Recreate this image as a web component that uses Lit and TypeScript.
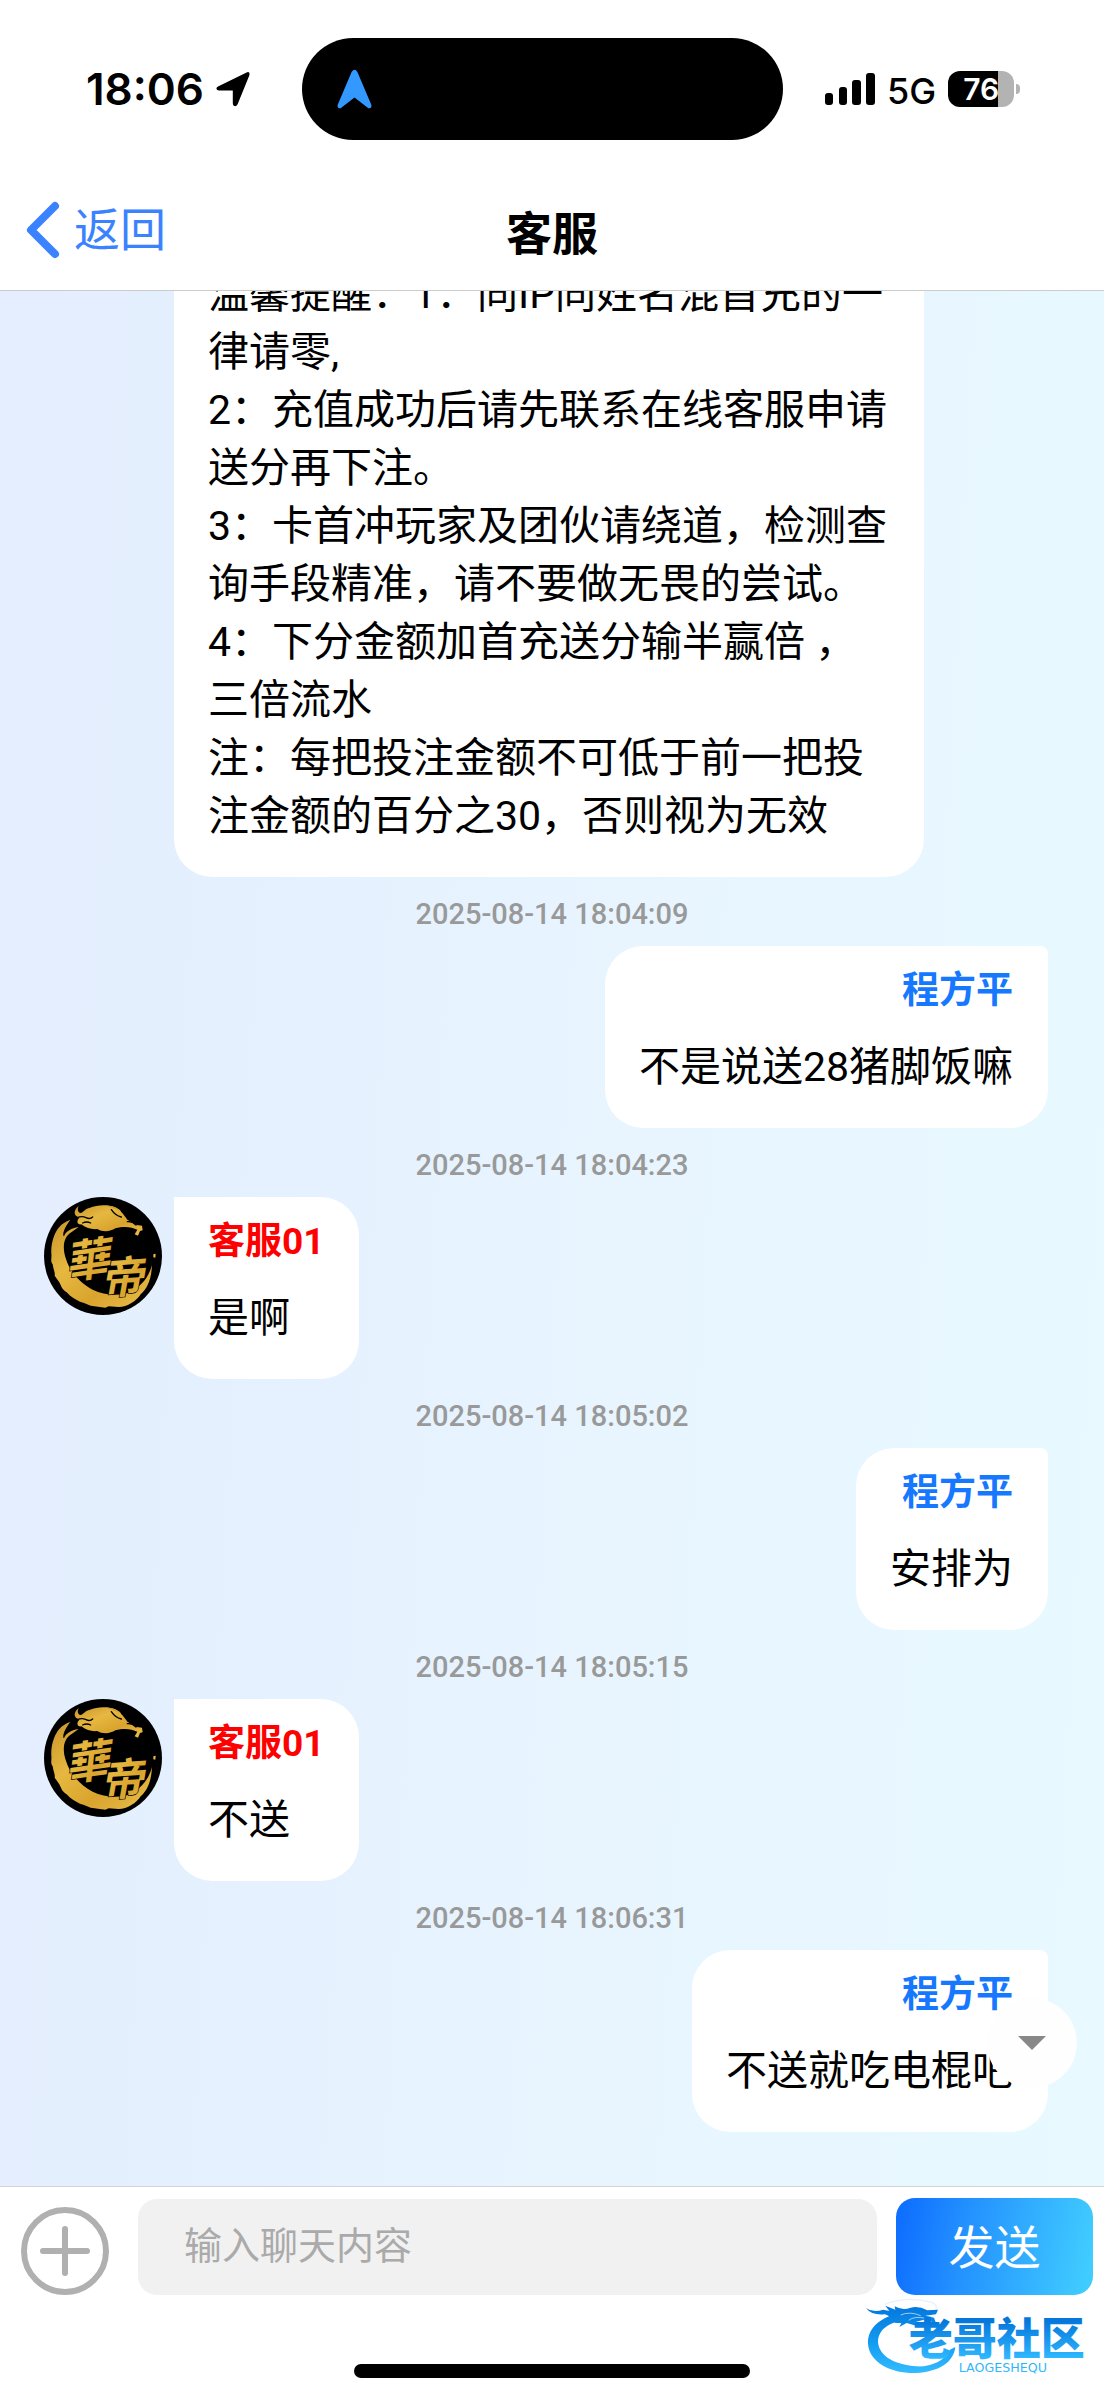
import { LitElement, html, css, svg, nothing } from "lit";
import { customElement, property, state } from "lit/decorators.js";

interface Message {
  side: "agent" | "me";
  name?: string;
  text: string;
  time?: string;
}

const MESSAGES: Message[] = [
  {
    side: "agent",
    text: [
      "温馨提醒：1：同IP同姓名混首充的一律请零,",
      "2：充值成功后请先联系在线客服申请送分再下注。",
      "3：卡首冲玩家及团伙请绕道，检测查询手段精准，请不要做无畏的尝试。",
      "4：下分金额加首充送分输半赢倍 ，三倍流水",
      "注：每把投注金额不可低于前一把投注金额的百分之30，否则视为无效",
    ].join("\n"),
  },
  { side: "me", name: "程方平", text: "不是说送28猪脚饭嘛", time: "2025-08-14 18:04:09" },
  { side: "agent", name: "客服01", text: "是啊", time: "2025-08-14 18:04:23" },
  { side: "me", name: "程方平", text: "安排为", time: "2025-08-14 18:05:02" },
  { side: "agent", name: "客服01", text: "不送", time: "2025-08-14 18:05:15" },
  { side: "me", name: "程方平", text: "不送就吃电棍吧", time: "2025-08-14 18:06:31" },
];

@customElement("status-bar")
export class StatusBar extends LitElement {
  static styles = css`
    :host {
      display: grid;
      grid-template-columns: 302fr 481fr 321fr;
      align-items: center;
      height: 177px;
      flex: none;
      font-family: Inter, "Liberation Sans", sans-serif;
      color: #000;
    }
    .left {
      display: flex;
      align-items: center;
      gap: 12px;
      padding-left: 86px;
    }
    .clock {
      font-size: 44px;
      line-height: 54px;
      font-weight: 600;
    }
    .island {
      display: flex;
      align-items: center;
      height: 102px;
      border-radius: 51px;
      background: #000;
      padding-left: 35px;
    }
    .right {
      display: flex;
      align-items: center;
      padding-left: 42px;
    }
    .network {
      font-size: 36px;
      line-height: 44px;
      font-weight: 500;
      margin: 4px 12px 0 12px;
    }
    .battery {
      display: flex;
      align-items: center;
      justify-content: center;
      width: 66px;
      height: 36px;
      border-radius: 12px;
      background: linear-gradient(90deg, #000 76%, #b3b3b3 76%);
      color: #fff;
      font-size: 30px;
      line-height: 36px;
      font-weight: 600;
    }
    .nub {
      width: 4px;
      height: 10px;
      margin-left: 2px;
      border-radius: 0 5px 5px 0;
      background: #b3b3b3;
    }
    svg {
      display: block;
      flex: none;
    }
  `;

  render() {
    return html`
      <div class="left">
        <span class="clock">18:06</span>
        <svg width="34" height="36" viewBox="0 0 34 36" aria-hidden="true">
          <path d="M2.5 15.2 30.6 1.4Q34 .2 33.4 4.2L21.6 33.2Q20.2 36 17.8 34.8 16.8 34 16.8 32V19.6H3Q.6 19.4.4 17.6.4 16.2 2.5 15.2Z" fill="#000" />
        </svg>
      </div>
      <div class="island">
        <svg width="35" height="40" viewBox="0 0 35 40" aria-hidden="true">
          <path d="M14.6 3Q17.5-1.6 20.4 3L34.4 36Q35 39.8 31.4 39.2L17.5 28.6 3.6 39.2Q0 39.8.6 36Z" fill="#3399ff" />
        </svg>
      </div>
      <div class="right">
        <svg width="50" height="33" viewBox="0 0 50 33" aria-hidden="true">
          <rect x="0" y="21" width="8" height="12" rx="3" />
          <rect x="14" y="15" width="8" height="18" rx="3" />
          <rect x="27" y="8" width="9" height="25" rx="3" />
          <rect x="41" y="1" width="9" height="32" rx="3" />
        </svg>
        <span class="network">5G</span>
        <span class="battery">76</span>
        <span class="nub"></span>
      </div>
    `;
  }
}

@customElement("agent-avatar")
export class AgentAvatar extends LitElement {
  static styles = css`
    :host {
      display: block;
      width: 118px;
      height: 118px;
      flex: none;
    }
    svg {
      display: block;
      width: 100%;
      height: 100%;
    }
    .mark {
      font-family: "Noto Sans CJK TC", sans-serif;
      font-weight: 700;
      font-style: italic;
    }
  `;

  render() {
    return html`
      <svg viewBox="12 14 354 354" role="img" aria-label="華帝">
        <defs>
          <linearGradient id="gold" x1="0" y1="0" x2="1" y2="1">
            <stop offset="0" stop-color="#c9942a" />
            <stop offset="0.35" stop-color="#e6b840" />
            <stop offset="0.65" stop-color="#d9a42e" />
            <stop offset="1" stop-color="#e9be4c" />
          </linearGradient>
        </defs>
        <circle cx="189" cy="191" r="177" fill="#000" />
        <path
          fill="url(#gold)"
          d="M58 104C45 118 32 150 34 184 36 196 30 206 38 216 40 232 46 240 44 250L58 270C64 282 66 292 80 300 92 314 108 322 120 328L132 332 152 340 196 346 206 342 236 344C262 344 290 326 302 306 322 288 334 262 336 218 328 248 312 272 284 292 252 312 200 312 158 292 116 270 88 234 78 200 66 166 70 134 94 120L116 104C92 108 76 118 72 132 64 128 78 96 92 82 76 88 66 94 58 104Z"
        />
        <path
          fill="url(#gold)"
          d="M116 41C102 52 102 64 108 70L118 76C108 86 112 98 124 96 140 108 156 112 172 110 188 120 212 118 226 108 252 100 276 104 292 112L284 126 294 130 300 116 308 114 306 100 290 98 262 82C250 66 236 46 216 42 196 36 168 38 150 46 136 48 130 60 122 62 112 60 112 50 116 41Z"
        />
        <g fill="none" stroke="#000" stroke-width="4" stroke-linecap="round">
          <path d="M112 76Q126 70 138 76T158 74" />
          <path d="M214 52Q226 70 244 74M262 88Q276 86 288 98" />
          <path d="M128 92Q140 86 152 92" />
        </g>
        <path fill="url(#gold)" d="M196 39Q236 42 244 60 222 48 196 39ZM340 186l7-2-1 12-6-1Z" />
        <g class="mark" fill="url(#gold)" stroke="#000" stroke-width="4" paint-order="stroke">
          <text x="74" y="252" font-size="134" transform="rotate(-8 142 205)">華</text>
          <text x="180" y="302" font-size="130" transform="rotate(-4 248 255)">帝</text>
        </g>
      </svg>
    `;
  }
}

@customElement("chat-message")
export class ChatMessage extends LitElement {
  @property({ attribute: false }) message!: Message;

  static styles = css`
    :host {
      display: block;
      flex: none;
    }
    .time {
      display: block;
      padding: 20px 0 14px;
      text-align: center;
      font-family: Roboto, "Noto Sans CJK SC", sans-serif;
      font-size: 29px;
      line-height: 35px;
      font-weight: 500;
      color: #999;
    }
    .row {
      display: flex;
      align-items: flex-start;
      gap: 12px;
      padding: 0 56px 0 44px;
    }
    .row.me {
      justify-content: flex-end;
    }
    .spacer {
      width: 118px;
      flex: none;
    }
    .bubble {
      display: flex;
      flex-direction: column;
      gap: 24px;
      box-sizing: border-box;
      max-width: 750px;
      padding: 22px 35px 32px 34px;
      background: #fff;
      border-radius: 0 38px 38px 38px;
    }
    .me .bubble {
      border-radius: 38px 8px 38px 38px;
      text-align: right;
    }
    .name {
      font-size: 37px;
      line-height: 46px;
      font-weight: 700;
      color: #f00;
    }
    .me .name {
      color: #1677ff;
    }
    .text {
      margin: 0;
      font-size: 41px;
      line-height: 58px;
      color: #000;
      white-space: pre-line;
    }
  `;

  render() {
    const { side, name, text, time } = this.message;
    const avatar =
      side === "me" ? nothing : name ? html`<agent-avatar></agent-avatar>` : html`<span class="spacer"></span>`;
    return html`
      ${time ? html`<time class="time">${time}</time>` : nothing}
      <div class="row ${side}">
        ${avatar}
        <div class="bubble">
          ${name ? html`<span class="name">${name}</span>` : nothing}
          <p class="text">${text}</p>
        </div>
      </div>
    `;
  }
}

@customElement("community-mark")
export class CommunityMark extends LitElement {
  static styles = css`
    :host {
      display: block;
      width: 240px;
      height: 85px;
    }
    svg {
      display: block;
    }
    .cn {
      font-family: "Noto Sans CJK SC", sans-serif;
      font-weight: 900;
    }
    .latin {
      font-family: "DejaVu Sans", sans-serif;
    }
  `;

  render() {
    return html`
      <svg width="240" height="85" viewBox="0 0 720 255" role="img" aria-label="老哥社区">
        <defs>
          <linearGradient id="sea" gradientUnits="userSpaceOnUse" x1="0" y1="40" x2="0" y2="235">
            <stop offset="0" stop-color="#0579de" />
            <stop offset="0.5" stop-color="#129af0" />
            <stop offset="1" stop-color="#33bcff" />
          </linearGradient>
          <linearGradient id="ink" gradientUnits="userSpaceOnUse" x1="0" y1="80" x2="0" y2="190">
            <stop offset="0" stop-color="#0678dc" />
            <stop offset="1" stop-color="#2fb8ff" />
          </linearGradient>
        </defs>
        <path
          fill="url(#sea)"
          d="M100 60C50 74 22 108 24 146 28 204 96 236 168 234 236 230 280 204 286 156L270 164C256 196 214 216 170 214 108 210 58 186 54 142 54 106 84 84 122 78Z"
        />
        <path
          fill="url(#sea)"
          d="M18 40Q40 54 70 44L88 48 76 32 106 44 104 34Q128 48 152 38 176 32 202 46L234 44 228 58 196 62 222 68 228 84 192 74 164 82 168 92 140 84 118 96 124 84 104 84 112 72 88 72Q90 62 74 58 36 62 18 40Z"
        />
        <path fill="none" stroke="#4aaeee" stroke-opacity="0.15" stroke-width="4" d="M74 28Q140 2 216 22 232 30 228 42" />
        <g stroke="#fff" stroke-width="3" fill="none" stroke-opacity="0.6">
          <path d="M122 60Q150 48 182 62M146 76Q164 62 196 70" />
        </g>
        <text class="cn" x="146" y="180" font-size="132" fill="url(#ink)">老哥社区</text>
        <text class="latin" x="296" y="230" font-size="38" fill="url(#sea)">LAOGESHEQU</text>
      </svg>
    `;
  }
}

@customElement("app-root")
export class AppRoot extends LitElement {
  @state() private draft = "";

  static styles = css`
    :host {
      display: flex;
      flex-direction: column;
      height: 100vh;
      overflow: hidden;
      background: #fff;
      font-family: Roboto, "Noto Sans CJK SC", sans-serif;
    }
    button,
    input {
      font-family: inherit;
      border: 0;
      margin: 0;
      padding: 0;
      background: none;
    }
    .nav {
      display: grid;
      grid-template-columns: 1fr auto 1fr;
      align-items: center;
      flex: none;
      height: 113px;
      padding: 0 25px;
      border-bottom: 1px solid #ccc;
    }
    .back {
      display: flex;
      align-items: center;
      gap: 14px;
      justify-self: start;
      padding-bottom: 8px;
      color: #3b82ff;
      text-decoration: none;
      font-size: 46px;
      line-height: 58px;
      font-weight: 400;
    }
    .title {
      margin: 0;
      font-size: 46px;
      line-height: 58px;
      font-weight: 700;
      color: #000;
    }
    .chat {
      position: relative;
      display: flex;
      flex-direction: column;
      justify-content: flex-end;
      flex: 1;
      min-height: 0;
      overflow: hidden;
      padding-bottom: 54px;
      background: linear-gradient(93deg, #e5eeff 0%, #e4f0fe 22%, #e8f5ff 55%, #e8f9ff 100%);
    }
    .jump {
      position: absolute;
      right: 27px;
      bottom: 98px;
      display: flex;
      align-items: center;
      justify-content: center;
      width: 90px;
      height: 90px;
      border-radius: 50%;
      background: #fefefe;
    }
    .composer {
      display: flex;
      flex-direction: column;
      flex: none;
      box-sizing: border-box;
      height: 214px;
      border-top: 1px solid #d4d4d4;
      padding: 11px 11px 22px;
      background: #fff;
    }
    .form {
      display: flex;
      align-items: center;
      padding-left: 10px;
    }
    .add {
      flex: none;
      align-self: flex-end;
      margin-right: 29px;
    }
    .field {
      flex: 1;
      min-width: 0;
      box-sizing: border-box;
      height: 96px;
      padding: 0 46px 2px;
      border-radius: 19px;
      background: #f1f1f1;
      font-size: 38px;
      font-weight: 400;
      color: #000;
      outline: none;
    }
    .field::placeholder {
      color: #aaa;
      opacity: 1;
    }
    .send {
      flex: none;
      width: 197px;
      height: 97px;
      margin-left: 19px;
      padding-bottom: 6px;
      border-radius: 19px;
      background: linear-gradient(100deg, #0f6fff 4%, #2390ff 34%, #40ccff 96%);
      color: #fff;
      font-size: 46px;
      font-weight: 400;
    }
    .mark {
      align-self: flex-end;
      margin-right: -7px;
    }
    .home {
      align-self: center;
      width: 396px;
      height: 14px;
      margin-top: -16px;
      border-radius: 7px;
      background: #000;
    }
    svg {
      display: block;
    }
  `;

  private onInput(e: Event) {
    this.draft = (e.target as HTMLInputElement).value;
  }

  private plusIcon() {
    return svg`
      <circle cx="44" cy="44" r="41" />
      <path d="M22 44H66M44 22V66" />
    `;
  }

  render() {
    return html`
      <status-bar></status-bar>
      <header class="nav">
        <a class="back" href="#back">
          <svg width="35" height="58" viewBox="0 0 35 58" fill="none" stroke="#3b82ff" stroke-width="8" stroke-linecap="round" stroke-linejoin="round" aria-hidden="true">
            <path d="M30 5 6 29 30 53" />
          </svg>
          <span>返回</span>
        </a>
        <h1 class="title">客服</h1>
      </header>
      <main class="chat">
        ${MESSAGES.map((m) => html`<chat-message .message=${m}></chat-message>`)}
        <button class="jump" type="button" aria-label="回到底部">
          <svg width="28" height="14" viewBox="0 0 28 14" aria-hidden="true">
            <path d="M0 0H28L14 14Z" fill="#888" />
          </svg>
        </button>
      </main>
      <footer class="composer">
        <form class="form" @submit=${(e: Event) => e.preventDefault()}>
          <button class="add" type="button" aria-label="添加">
            <svg width="88" height="88" viewBox="0 0 88 88" fill="none" stroke="#b0b0b0" stroke-width="6" stroke-linecap="round" aria-hidden="true">
              ${this.plusIcon()}
            </svg>
          </button>
          <input class="field" type="text" aria-label="输入聊天内容" placeholder="输入聊天内容" .value=${this.draft} @input=${this.onInput} />
          <button class="send" type="submit">发送</button>
        </form>
        <community-mark class="mark"></community-mark>
        <div class="home"></div>
      </footer>
    `;
  }
}
